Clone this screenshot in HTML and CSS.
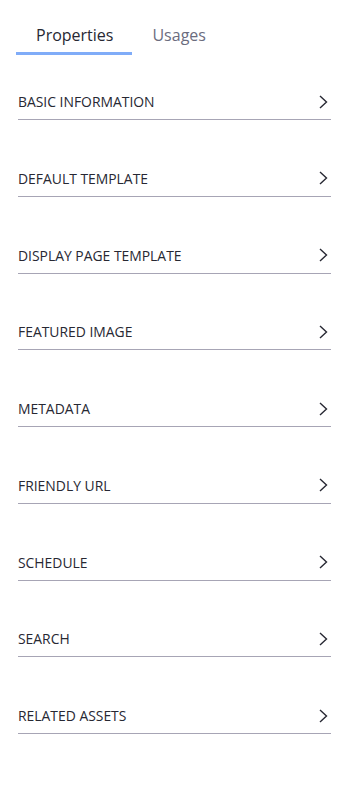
FILE: index.html
```html
<!DOCTYPE html>
<html>
<head>
<meta charset="utf-8">
<link rel="stylesheet" href="styles.css">
</head>
<body>
<div class="panel">
  <nav class="tabs">
    <div class="tab active">Properties</div>
    <div class="tab">Usages</div>
  </nav>
  <ul class="sections">
    <li class="row"><span>BASIC INFORMATION</span><svg class="chev" viewBox="0 0 12 16"><path d="M3 2 L9.5 8 L3 14"/></svg></li>
    <li class="row"><span>DEFAULT TEMPLATE</span><svg class="chev" viewBox="0 0 12 16"><path d="M3 2 L9.5 8 L3 14"/></svg></li>
    <li class="row"><span>DISPLAY PAGE TEMPLATE</span><svg class="chev" viewBox="0 0 12 16"><path d="M3 2 L9.5 8 L3 14"/></svg></li>
    <li class="row"><span>FEATURED IMAGE</span><svg class="chev" viewBox="0 0 12 16"><path d="M3 2 L9.5 8 L3 14"/></svg></li>
    <li class="row"><span>METADATA</span><svg class="chev" viewBox="0 0 12 16"><path d="M3 2 L9.5 8 L3 14"/></svg></li>
    <li class="row"><span>FRIENDLY URL</span><svg class="chev" viewBox="0 0 12 16"><path d="M3 2 L9.5 8 L3 14"/></svg></li>
    <li class="row"><span>SCHEDULE</span><svg class="chev" viewBox="0 0 12 16"><path d="M3 2 L9.5 8 L3 14"/></svg></li>
    <li class="row"><span>SEARCH</span><svg class="chev" viewBox="0 0 12 16"><path d="M3 2 L9.5 8 L3 14"/></svg></li>
    <li class="row"><span>RELATED ASSETS</span><svg class="chev" viewBox="0 0 12 16"><path d="M3 2 L9.5 8 L3 14"/></svg></li>
  </ul>
</div>
</body>
</html>
```
FILE: styles.css
```css
html, body {
  margin: 0;
  padding: 0;
  background: #fff;
}
body {
  font-family: "Open Sans", "Noto Sans", sans-serif;
  color: #272833;
}
.panel {
  padding: 20px 17px 0 16px;
}
.tabs {
  display: flex;
}
.tab {
  font-size: 16px;
  line-height: 22px;
  padding: 4px 19px 6px 20px;
  color: #6b6c7e;
  border-bottom: 3px solid transparent;
}
.tab.active {
  color: #272833;
  border-bottom-color: #80acf8;
}
.sections {
  list-style: none;
  margin: 27px 0 0 0;
  padding: 0 0 0 2px;
}
.row {
  display: flex;
  justify-content: space-between;
  align-items: center;
  height: 38px;
  margin-bottom: 38.75px;
  font-size: 13.9px;
  border-bottom: 1px solid #a7a5b5;
  padding: 2px 0 0 0;
  box-sizing: border-box;
}
.chev {
  width: 12px;
  height: 16px;
  margin-right: 2px;
  fill: none;
  stroke: #272833;
  stroke-width: 1.4;
}
```
